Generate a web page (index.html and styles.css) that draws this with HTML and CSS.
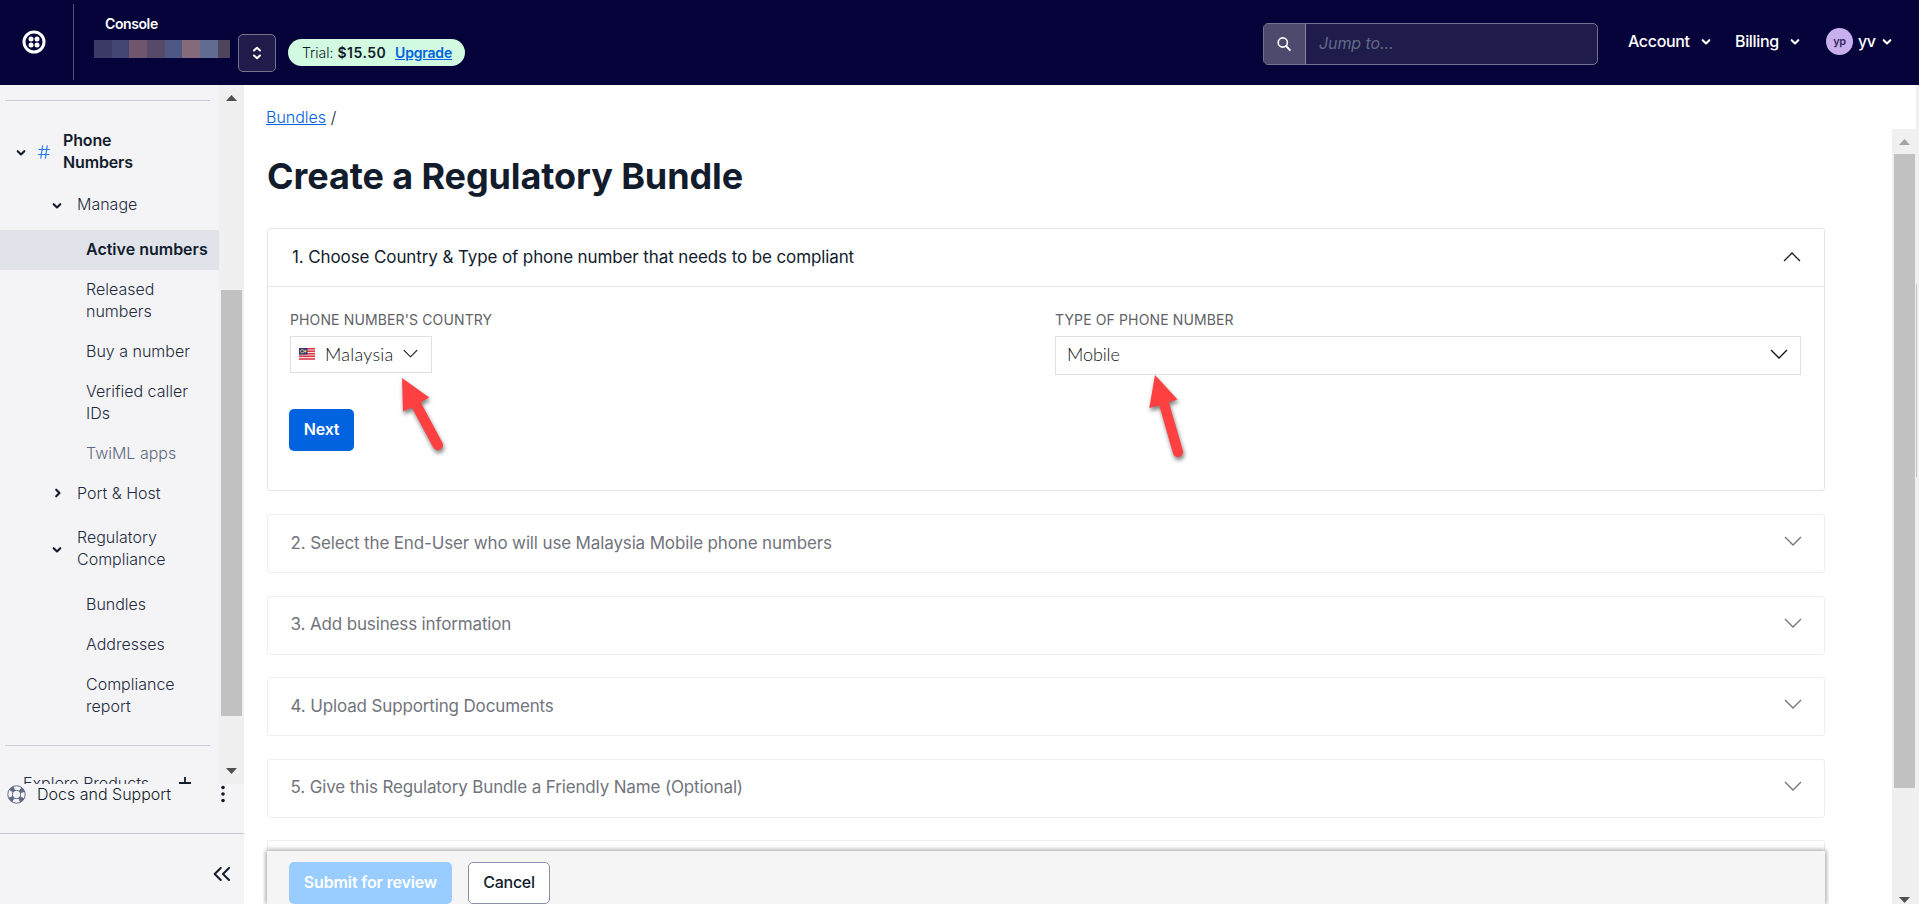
FILE: index.html
```html
<!DOCTYPE html>
<html lang="en">
<head>
<meta charset="utf-8">
<title>Create a Regulatory Bundle</title>
<link rel="stylesheet" href="styles.css">
</head>
<body>
<svg class="defs" width="0" height="0">
  <symbol id="caret" viewBox="0 0 10 8"><path d="M1.7 2.2 5 5.5 8.3 2.2" fill="none" stroke="currentColor" stroke-width="2.1" stroke-linecap="round" stroke-linejoin="round"/></symbol>
  <symbol id="chevron" viewBox="0 0 18 10"><path d="M1 1 9 9 17 1" fill="none" stroke="currentColor" stroke-width="1.3"/></symbol>
</svg>
<header class="topbar">
  <div class="brand">
    <svg width="24" height="24" viewBox="0 0 24 24"><circle cx="12" cy="12" r="10" fill="none" stroke="#fff" stroke-width="3"/><g fill="#fff"><circle cx="9" cy="9" r="2.5"/><circle cx="15" cy="9" r="2.5"/><circle cx="9" cy="15" r="2.5"/><circle cx="15" cy="15" r="2.5"/></g></svg>
  </div>
  <div class="account">
    <span class="console">Console</span>
    <div class="mosaic"><i class="m1"></i><i class="m2"></i><i class="m3"></i><i class="m4"></i><i class="m5"></i><i class="m6"></i><i class="m7"></i><i class="m8"></i></div>
  </div>
  <button class="switcher"><svg width="10" height="14" viewBox="0 0 10 14"><path d="M2 4.5 5 1.7 8 4.5M2 9.5 5 12.3 8 9.5" fill="none" stroke="#fff" stroke-width="2" stroke-linecap="round" stroke-linejoin="round"/></svg></button>
  <div class="trial"><span>Trial: <b>$15.50</b></span><a>Upgrade</a></div>
  <div class="search">
    <div class="search-icon"><svg width="14" height="16" viewBox="0 0 14 16"><circle cx="5.8" cy="6.5" r="4.6" fill="none" stroke="#fff" stroke-width="1.6"/><path d="M9.3 10.2 12.8 14" stroke="#fff" stroke-width="1.9" stroke-linecap="round"/></svg></div>
    <span class="search-text">Jump to...</span>
  </div>
  <nav class="menus">
    <span class="menu-account">Account</span><svg class="caret"><use href="#caret"/></svg>
    <span class="menu-billing">Billing</span><svg class="caret"><use href="#caret"/></svg>
    <span class="avatar">yp</span><span class="menu-user">yv</span><svg class="caret caret-user"><use href="#caret"/></svg>
  </nav>
</header>
<div class="body">
  <aside class="sidebar">
    <div class="side-scroll">
      <div class="side-list">
        <hr>
        <div class="row product"><svg class="caret"><use href="#caret"/></svg>
          <svg class="hash" width="12" height="14" viewBox="0 0 12 14"><path d="M4.7 .3 2.7 13.7M9.3 .3 7.3 13.7M.5 4.5H12M0 9.5H11.5" fill="none" stroke="#2178ec" stroke-width="1.1"/></svg>
          <span>Phone<br>Numbers</span></div>
        <div class="row group manage"><svg class="caret"><use href="#caret"/></svg><span>Manage</span></div>
        <div class="row leaf active">Active numbers</div>
        <div class="row leaf">Released<br>numbers</div>
        <div class="row leaf">Buy a number</div>
        <div class="row leaf">Verified caller<br>IDs</div>
        <div class="row leaf faded">TwiML apps</div>
        <div class="row group port"><svg class="caret right"><use href="#caret"/></svg><span>Port &amp; Host</span></div>
        <div class="row group reg"><svg class="caret"><use href="#caret"/></svg><span>Regulatory<br>Compliance</span></div>
        <div class="row leaf">Bundles</div>
        <div class="row leaf">Addresses</div>
        <div class="row leaf">Compliance<br>report</div>
        <hr class="low">
        <div class="explore"><span>Explore Products</span><svg width="14" height="14" viewBox="0 0 14 14"><path d="M7 1V13M1 7H13" stroke="#121c2d" stroke-width="1.8"/></svg></div>
      </div>
      <div class="track side-track">
        <svg width="11" height="6" viewBox="0 0 11 6"><path d="M0 6 5.5 0 11 6Z" fill="#505050"/></svg>
        <div class="thumb side-thumb"></div>
        <svg width="11" height="6" viewBox="0 0 11 6"><path d="M0 0 5.5 6 11 0Z" fill="#505050"/></svg>
      </div>
    </div>
    <div class="docs">
      <svg width="19" height="19" viewBox="0 0 19 19"><circle cx="9.5" cy="9.5" r="6.4" fill="none" stroke="#606b85" stroke-width="5" stroke-dasharray="4 6.05" stroke-dashoffset="-3.03"/><circle cx="9.5" cy="9.5" r="8.7" fill="none" stroke="#606b85"/><circle cx="9.5" cy="9.5" r="4.1" fill="none" stroke="#606b85"/></svg>
      <span>Docs and Support</span>
      <svg width="4" height="18" viewBox="0 0 4 18"><g fill="#121c2d"><circle cx="2" cy="2.5" r="1.8"/><circle cx="2" cy="9" r="1.8"/><circle cx="2" cy="15.5" r="1.8"/></g></svg>
    </div>
    <div class="collapse"><svg width="18" height="14" viewBox="0 0 18 14"><path d="M7.7 1 1.7 7 7.7 13M16 1 10 7 16 13" fill="none" stroke="#121c2d" stroke-width="2" stroke-linecap="round" stroke-linejoin="round"/></svg></div>
  </aside>
  <main class="content">
    <div class="crumbs"><a>Bundles</a> /</div>
    <h1><span>Create a Regulatory Bundle</span></h1>
    <section class="panel open">
      <div class="panel-head"><span>1. Choose Country &amp; Type of phone number that needs to be compliant</span><svg class="chev up"><use href="#chevron"/></svg></div>
      <div class="fields">
        <div class="field">
          <label>PHONE NUMBER'S COUNTRY</label>
          <div class="select country">
            <svg class="flag" width="16" height="12" viewBox="0 0 16 12"><path fill="#f7dfe2" d="M0 0H16V12H0Z"/><path d="M0 .7H16M0 3.2H16M0 5.7H16M0 8.2H16M0 11H16" stroke="#dd3545" stroke-width="1.4"/><path fill="#343b80" d="M0 0H8.5V6.6H0Z"/><circle cx="3.3" cy="3.3" r="1.7" fill="none" stroke="#d3c56b"/><circle cx="6.3" cy="3.3" r="1.2" fill="#d3c56b"/></svg>
            <span>Malaysia</span><svg class="chev small"><use href="#chevron"/></svg></div>
        </div>
        <div class="field">
          <label>TYPE OF PHONE NUMBER</label>
          <div class="select type"><span>Mobile</span><svg class="chev"><use href="#chevron"/></svg></div>
        </div>
      </div>
      <button class="btn next">Next</button>
    </section>
    <section class="panel closed"><span>2. Select the End-User who will use Malaysia Mobile phone numbers</span><svg class="chev"><use href="#chevron"/></svg></section>
    <section class="panel closed"><span>3. Add business information</span><svg class="chev"><use href="#chevron"/></svg></section>
    <section class="panel closed"><span>4. Upload Supporting Documents</span><svg class="chev"><use href="#chevron"/></svg></section>
    <section class="panel closed"><span>5. Give this Regulatory Bundle a Friendly Name (Optional)</span><svg class="chev"><use href="#chevron"/></svg></section>
    <section class="panel closed"></section>
    <div class="actions"><button class="btn submit">Submit for review</button><button class="btn cancel">Cancel</button></div>
  </main>
  <div class="track main-track">
    <svg width="11" height="6" viewBox="0 0 11 6"><path d="M0 6 5.5 0 11 6Z" fill="#a3a3a3"/></svg>
    <div class="thumb main-thumb"></div>
    <svg width="11" height="6" viewBox="0 0 11 6"><path d="M0 0 5.5 6 11 0Z" fill="#505050"/></svg>
  </div>
  <div class="edge"><div class="edge-thumb"></div></div>
</div>
<svg class="pointers" width="1919" height="904" viewBox="0 0 1919 904">
  <g class="pointer">
    <path d="M402 378 429.3 397.5 420.7 402.3 442.6 443 A5.2 5.2 0 0 1 433.4 447.7L411.8 407.5 403 411.5Z"/>
    <path d="M1155 375 1177.5 399.5 1168.8 402.3 1183 450.7A5.2 5.2 0 0 1 1173.1 453.8L1159.3 405.5 1149.3 408Z"/>
  </g>
</svg>
</body>
</html>
```
FILE: styles.css
```css
* { box-sizing: border-box; }
body { margin: 0; width: 1919px; height: 904px; overflow: hidden; position: relative; font-family: Inter, sans-serif; font-size: 16px; color: #121c2d; background: #fff; }
.defs { display: block; position: absolute; }
svg { display: block; flex: none; }
button { font: inherit; padding: 0; }
span, a { white-space: nowrap; }
.caret { width: 10px; height: 8px; }

.topbar { height: 85px; background: #06033a; color: #fff; display: flex; align-items: flex-start; }
.brand { width: 74px; height: 76px; margin-top: 4px; padding: 26px 0 0 22px; border-right: 1px solid #53516f; }
.account { width: 164px; padding: 11px 0 0 20px; }
.console { display: block; padding-left: 11px; font-size: 14px; line-height: 26px; font-weight: 600; letter-spacing: -.4px; height: 29px; }
.mosaic { display: flex; height: 18px; }
.mosaic i { width: 17.7px; }
.mosaic .m1 { background: #3c3b68; }
.mosaic .m2 { background: #434575; }
.mosaic .m3 { background: #70566f; }
.mosaic .m4 { background: #564a68; }
.mosaic .m5 { background: #4d5783; }
.mosaic .m6 { background: #836a79; }
.mosaic .m7 { background: #626b92; }
.mosaic .m8 { background: #4e445c; width: 12px; }
.switcher { width: 38px; height: 38px; margin-top: 34px; background: #1f1c4c; border: 1px solid #74728c; border-radius: 5px; display: grid; place-items: center; }
.trial { width: 177px; height: 27px; margin: 39px 0 0 12px; padding: 0 13px 1px 14px; border-radius: 14px; background: #d1fae0; color: #121c2d; font-size: 14px; font-weight: 300; display: flex; align-items: center; justify-content: space-between; }
.trial a { color: #0263e0; font-weight: 600; text-decoration: underline; letter-spacing: -.2px; }
.trial b { font-weight: 600; letter-spacing: .5px; }
.search { width: 335px; height: 42px; margin: 23px 0 0 798px; display: flex; align-items: center; border: 1px solid #74728c; border-radius: 5px; background: #1f1c4c; overflow: hidden; }
.search-icon { width: 42px; height: 40px; padding-right: 2px; background: #4d4a6d; border-right: 1px solid #8886a0; display: grid; place-items: center; }
.search-text { padding: 0 0 2px 13px; font-style: italic; color: #606b85; letter-spacing: -.1px; }
.menus { height: 26px; margin: 28px 0 0 30px; display: flex; align-items: center; font-weight: 500; letter-spacing: -.35px; }
.menus .caret { margin-left: 10px; margin-top: 2px; }
.menu-account { width: 63px; }
.menu-billing { width: 45px; margin-left: 24px; }
.avatar { width: 27px; height: 27px; margin-left: 26px; border-radius: 50%; background: #c8afee; color: #3a2a60; font-size: 11px; font-weight: 600; display: grid; place-items: center; }
.menu-user { width: 18px; margin-left: 5px; }
.menus .caret-user { margin-left: 6px; }

.body { display: flex; height: 819px; }
.sidebar { width: 244px; background: #f4f4f6; color: #1f2b41; font-weight: 300; display: flex; flex-direction: column; }
.side-scroll { height: 699px; display: flex; overflow: hidden; }
.side-list { width: 219px; }
.side-list hr { margin: 15px 9px 20px 5px; border: 0; border-top: 1px solid #cacdd8; }
.row { padding: 8px 0 10px; line-height: 22px; font-size: 16px; display: flex; }
.product { height: 62px; padding-left: 16px; font-weight: 600; color: #121c2d; align-items: center; letter-spacing: -.15px; }
.product .hash { margin: 2px 13px 0 12px; }
.group { padding-left: 52px; align-items: center; }
.group .caret, .product .caret { color: #121c2d; margin-top: 3px; }
.group .caret { margin-right: 15px; }
.group .caret.right { transform: rotate(-90deg); margin: 0 14px 0 1px; }
.manage { margin: 2px 0 5px; }
.reg { margin: 4px 0 5px; }
.leaf { padding-left: 86px; }
.active { background: #e1e3ea; color: #121c2d; font-weight: 600; letter-spacing: 0; }
.faded { color: #606b80; }
.side-list hr.low { margin: 18px 9px 29px 5px; }
.explore { display: flex; align-items: center; padding-left: 23px; line-height: 22px; margin-top: -3px; }
.explore span { width: 155px; }
.track { background: #f0f0f0; display: flex; flex-direction: column; align-items: center; }
.thumb { width: 21px; background: #c1c1c1; }
.side-track { width: 25px; height: 699px; padding-top: 10px; }
.side-thumb { height: 426px; margin: 189px 0 52px; }
.docs { height: 50px; display: flex; padding-left: 7px; border-bottom: 1px solid #c6c9d2; color: #121c2d; line-height: 20px; }
.docs span { width: 195px; padding-left: 11px; }
.docs svg { margin-top: 1px; }
.collapse { padding: 33px 0 0 213px; }

.content { width: 1648px; padding-left: 23px; overflow: hidden; }
.crumbs { height: 63px; margin-left: -1px; line-height: 64px; font-weight: 300; }
.crumbs a { color: #0263e0; text-decoration: underline; }
h1 { margin: 0; height: 80px; line-height: 56px; font-size: 36px; font-weight: 700; letter-spacing: -.1px; }
.panel { width: 1558px; border: 1px solid #e5e5e6; border-radius: 3px; font-size: 17px; letter-spacing: -.11px; }
.chev { width: 18px; height: 10px; }
.up { transform: scaleY(-1); }
.open { height: 263px; margin-bottom: 23px; }
.panel-head { height: 58px; padding: 0 23px 1px 24px; display: flex; align-items: center; justify-content: space-between; border-bottom: 1px solid #e5e5e6; }
.fields { display: grid; grid-template-columns: 765px 746px; padding: 24px 0 0 22px; }
label { display: block; height: 25px; line-height: 18px; font-size: 14px; color: #606266; letter-spacing: .13px; }
.select { border: 1px solid #e0e1e3; display: flex; align-items: center; font-family: Lato, sans-serif; font-size: 18px; font-weight: 300; color: #111; letter-spacing: 0; }
.country { width: 142px; height: 37px; padding: 0 0 2px 8px; }
.country span { width: 78px; padding-left: 10px; letter-spacing: .25px; }
.small { width: 15px; height: 9px; }
.country .small { margin-left: 10px; }
.type { height: 39px; padding: 0 12px 4px 11px; justify-content: space-between; }
.type span { letter-spacing: -.1px; }
.btn { height: 42px; border: 0; border-radius: 5px; font-size: 16px; font-weight: 600; letter-spacing: -.25px; padding-bottom: 2px; }
.next { display: block; width: 65px; margin: 34px 0 0 21px; background: #0263e0; color: #fff; }
.closed { height: 59px; margin-bottom: 22.5px; padding: 0 22px 2px 22.5px; display: flex; align-items: center; justify-content: space-between; color: #71747c; border-color: #eee; letter-spacing: -.14px; }
.closed .chev { margin-top: -3px; }
.actions { position: absolute; left: 267px; top: 851px; width: 1558px; height: 53px; padding: 11px 22px; display: flex; gap: 16px; background: #f5f5f5; box-shadow: 0 0 5px 1px rgba(0,0,0,.38); clip-path: inset(-8px -4px 0 -4px); }
.submit { width: 163px; background: #99cdff; color: #fff; letter-spacing: -.15px; }
.cancel { width: 82px; background: #fff; border: 1px solid #8891aa; color: #121c2d; font-weight: 500; }
.main-track { width: 24px; height: 775px; margin-top: 44px; padding-top: 10px; }
.main-thumb { height: 634px; margin: 9px 0 109px; }
.edge { width: 3px; background: #f0f0f0; padding-top: 199px; }
.edge-thumb { width: 1px; height: 193px; background: #c1c1c1; }
.pointers { position: absolute; left: 0; top: 0; pointer-events: none; }
.pointer { fill: #ff4040; filter: drop-shadow(1px 3px 2px rgba(0,0,0,.5)); }
```
